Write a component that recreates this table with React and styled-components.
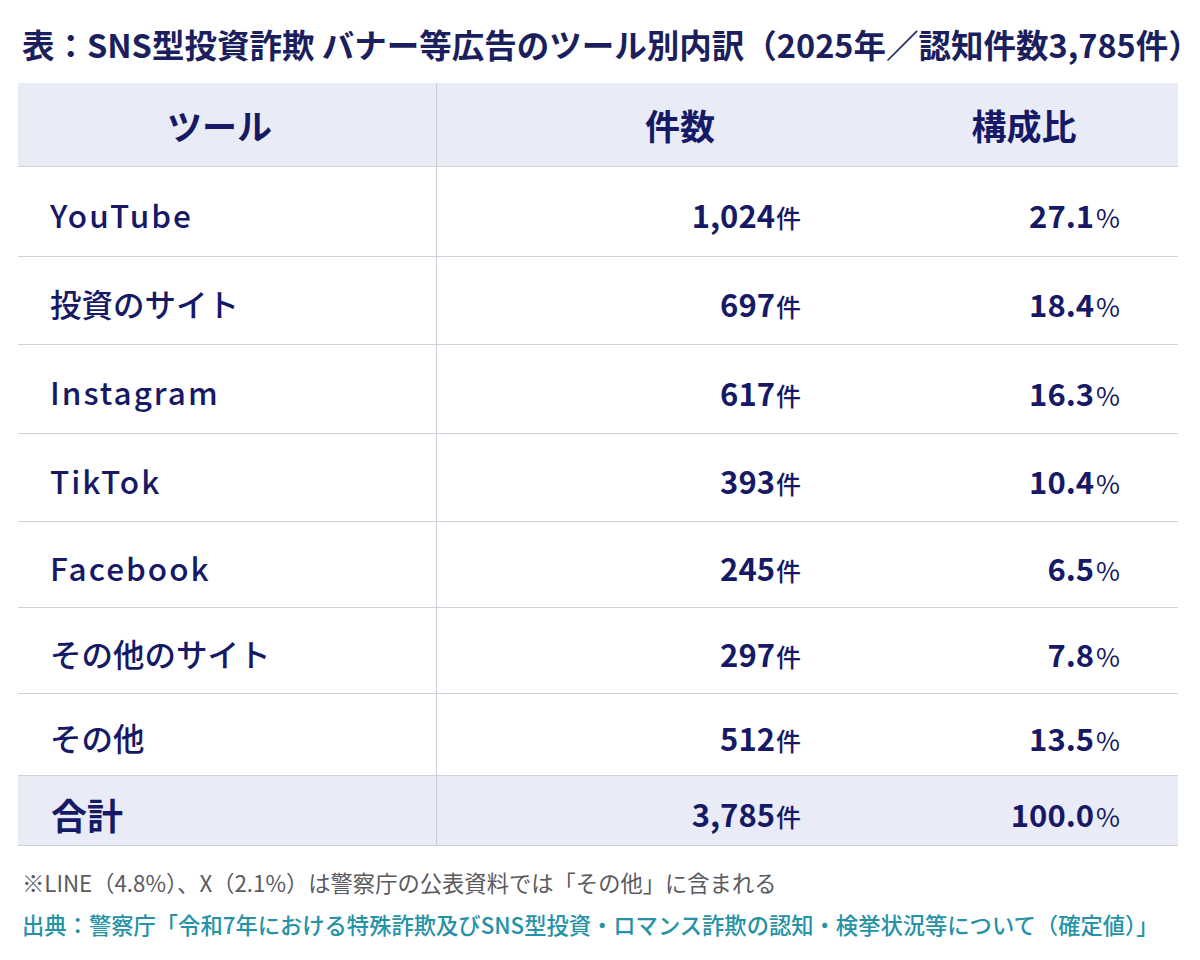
import React from "react";
import styled, { createGlobalStyle } from "styled-components";

const Global = createGlobalStyle`
  html, body { margin: 0; padding: 0; background: #ffffff; }
  body { font-family: "Noto Sans CJK JP", "Noto Sans", sans-serif; color: #161a66; }
`;

const Page = styled.div`
  width: 1200px;
  height: 960px;
  box-sizing: border-box;
  padding: 20px 22px 0 18px;
  background: #fff;
`;

const Title = styled.h1`
  margin: 0 0 15px 4px;
  font-size: 32.5px;
  line-height: 48px;
  font-weight: 700;
  color: #1b1f5e;
  white-space: nowrap;
`;

const Table = styled.div`
  width: 1160px;
  display: flex;
  flex-direction: column;
`;

const Row = styled.div`
  display: grid;
  grid-template-columns: 419px 463px 278px;
  height: ${(p) => p.$h}px;
  box-sizing: border-box;
  background: ${(p) => (p.$shade ? "#e9ebf6" : "#ffffff")};
  border-bottom: 1px solid #cfd1da;
`;

const Cell = styled.div`
  display: flex;
  align-items: center;
  justify-content: ${(p) => p.$justify || "flex-start"};
  padding: ${(p) => p.$pad || "0"};
  box-sizing: border-box;
  border-right: ${(p) => (p.$divider ? "1px solid #c9cad3" : "none")};
  color: #161a66;
  white-space: nowrap;
`;

const HeadText = styled.span`
  font-size: 35px;
  font-weight: 700;
  line-height: 1;
`;

const Label = styled.span`
  font-size: ${(p) => (p.$total ? 36 : 31.5)}px;
  font-weight: ${(p) => (p.$total ? 700 : 500)};
  letter-spacing: ${(p) => (p.$latin ? "2px" : "0")};
  line-height: 1;
  padding-top: 6px;
`;

const Num = styled.span`
  font-size: 31px;
  font-weight: 700;
  line-height: 1;
  padding-top: 6px;
`;

const Unit = styled.span`
  font-size: 25px;
  font-weight: 500;
  margin-left: 1px;
`;

const Pct = styled.span`
  font-size: 26px;
  font-weight: 400;
  margin-left: 2px;
`;

const Note = styled.p`
  margin: 20px 0 0 4px;
  font-size: 22.3px;
  line-height: 33px;
  color: #5a5a5f;
  font-weight: 400;
  white-space: nowrap;
`;

const Source = styled.p`
  margin: 9px 0 0 4px;
  font-size: 22.3px;
  line-height: 33px;
  color: #2592a6;
  font-weight: 500;
  white-space: nowrap;
`;

const rows = [
  { name: "YouTube", latin: true, count: "1,024", pct: "27.1", h: 90 },
  { name: "投資のサイト", count: "697", pct: "18.4", h: 88 },
  { name: "Instagram", latin: true, count: "617", pct: "16.3", h: 89 },
  { name: "TikTok", latin: true, count: "393", pct: "10.4", h: 88 },
  { name: "Facebook", latin: true, count: "245", pct: "6.5", h: 86 },
  { name: "その他のサイト", count: "297", pct: "7.8", h: 86 },
  { name: "その他", count: "512", pct: "13.5", h: 82 },
];

export default function App() {
  return (
    <>
      <Global />
      <Page>
        <Title>表：SNS型投資詐欺 バナー等広告のツール別内訳（2025年／認知件数3,785件）</Title>
        <Table>
          <Row $h={84} $shade>
            <Cell $divider $justify="center" $pad="0 15px 0 0">
              <HeadText>ツール</HeadText>
            </Cell>
            <Cell $justify="center" $pad="0 0 0 23px">
              <HeadText>件数</HeadText>
            </Cell>
            <Cell $justify="center" $pad="0 30px 0 0">
              <HeadText>構成比</HeadText>
            </Cell>
          </Row>
          {rows.map((r) => (
            <Row key={r.name} $h={r.h}>
              <Cell $divider $pad="0 0 0 32px">
                <Label $latin={r.latin}>{r.name}</Label>
              </Cell>
              <Cell $justify="flex-end" $pad="0 99px 0 0">
                <Num>
                  {r.count}
                  <Unit>件</Unit>
                </Num>
              </Cell>
              <Cell $justify="flex-end" $pad="0 58px 0 0">
                <Num>
                  {r.pct}
                  <Pct>%</Pct>
                </Num>
              </Cell>
            </Row>
          ))}
          <Row $h={70} $shade>
            <Cell $divider $pad="0 0 0 33px">
              <Label $total>合計</Label>
            </Cell>
            <Cell $justify="flex-end" $pad="0 99px 0 0">
              <Num>
                3,785
                <Unit>件</Unit>
              </Num>
            </Cell>
            <Cell $justify="flex-end" $pad="0 58px 0 0">
              <Num>
                100.0
                <Pct>%</Pct>
              </Num>
            </Cell>
          </Row>
        </Table>
        <Note>※LINE（4.8%）、X（2.1%）は警察庁の公表資料では「その他」に含まれる</Note>
        <Source>出典：警察庁「令和7年における特殊詐欺及びSNS型投資・ロマンス詐欺の認知・検挙状況等について（確定値）」</Source>
      </Page>
    </>
  );
}
